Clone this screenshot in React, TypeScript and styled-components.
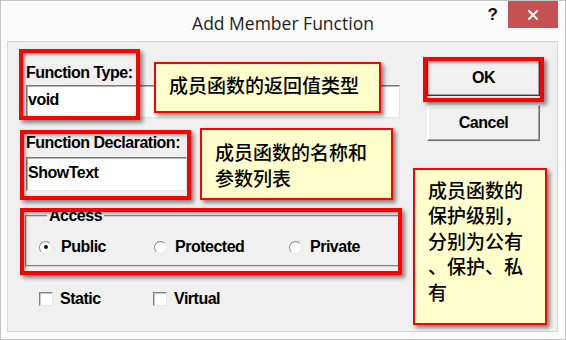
import React from "react";
import styled, { createGlobalStyle } from "styled-components";

const GlobalStyle = createGlobalStyle`
  html, body { margin: 0; padding: 0; background: #ffffff; }
  body { font-family: "Liberation Sans", Arial, sans-serif; }
  * { box-sizing: border-box; }
`;

const Window = styled.div`
  position: relative;
  width: 566px;
  height: 340px;
  border: 1px solid #c4c4c4;
  background: #fbfbfb;
  display: flex;
  flex-direction: column;
  overflow: hidden;
`;

const TitleBar = styled.div`
  height: 40px;
  display: grid;
  grid-template-columns: 1fr auto 1fr;
  align-items: start;
`;

const Title = styled.div`
  grid-column: 2;
  font-family: "Open Sans", "Noto Sans", sans-serif;
  font-size: 17.5px;
  line-height: 24px;
  color: #1e1e1e;
  padding-top: 10px;
  white-space: nowrap;
`;

const TitleControls = styled.div`
  grid-column: 3;
  justify-self: end;
  display: flex;
  align-items: flex-start;
  margin-right: 7px;
`;

const HelpMark = styled.div`
  font-family: "Liberation Sans", Arial, sans-serif;
  font-weight: bold;
  font-size: 17px;
  line-height: 20px;
  color: #111;
  padding-top: 4px;
  margin-right: 10px;
`;

const CloseButton = styled.div`
  width: 50px;
  height: 27px;
  background: #c75050;
  display: flex;
  align-items: center;
  justify-content: center;
`;

const Panel = styled.div`
  margin: 0 7px 0 6px;
  height: 291px;
  border: 1px solid #d6d6d6;
  background: #f0f0f0;
  display: flex;
  gap: 27px;
  padding: 0 17px 0 18px;
`;

const LeftColumn = styled.div`
  width: 374px;
  display: flex;
  flex-direction: column;
`;

const RightColumn = styled.div`
  width: 113px;
  padding-top: 18px;
  display: flex;
  flex-direction: column;
  gap: 9px;
`;

const boldText = `
  font-family: "Liberation Sans", Arial, sans-serif;
  font-weight: bold;
  font-size: 16px;
  letter-spacing: -0.5px;
  line-height: 18px;
  color: #000;
`;

const FieldLabel = styled.div<{ $top: number }>`
  ${boldText}
  margin-top: ${(p) => p.$top}px;
  white-space: nowrap;
`;

const TextBox = styled.div<{ $top: number; $width: number; $height: number; $padTop: number }>`
  ${boldText}
  margin-top: ${(p) => p.$top}px;
  width: ${(p) => p.$width}px;
  height: ${(p) => p.$height}px;
  padding: ${(p) => p.$padTop}px 0 0 1px;
  background: #ffffff;
  border: 1px solid;
  border-color: #7a7a7a #e3e3e3 #e3e3e3 #7a7a7a;
  box-shadow: inset 1px 1px 0 #b4b4b4;
`;

const GroupBox = styled.fieldset`
  margin: 16px 0 0 -1px;
  width: 376px;
  min-inline-size: 0;
  padding: 13px 0 9px 12px;
  border: 2px groove #d4d4d4;
`;

const GroupLegend = styled.legend`
  ${boldText}
  margin-left: 8px;
  padding: 0 2px;
`;

const RadioRow = styled.div`
  display: grid;
  grid-template-columns: 115px 135px auto;
`;

const OptionItem = styled.label<{ $gap: number }>`
  ${boldText}
  display: flex;
  align-items: center;
  gap: ${(p) => p.$gap}px;
  white-space: nowrap;
`;

const RadioCircle = styled.span<{ $checked?: boolean }>`
  width: 13px;
  height: 13px;
  border-radius: 50%;
  background: #ffffff;
  border: 1px solid;
  border-color: #8a8a8a #e8e8e8 #e8e8e8 #8a8a8a;
  display: flex;
  align-items: center;
  justify-content: center;
  flex: none;
  &::after {
    content: "";
    width: 4px;
    height: 4px;
    border-radius: 50%;
    background: ${(p) => (p.$checked ? "#111" : "transparent")};
  }
`;

const CheckRow = styled.div`
  margin-top: 23px;
  padding-left: 13px;
  display: grid;
  grid-template-columns: 114px auto;
`;

const CheckSquare = styled.span`
  width: 14px;
  height: 14px;
  background: #ffffff;
  border: 1px solid;
  border-color: #7f7f7f #e6e6e6 #e6e6e6 #7f7f7f;
  box-shadow: inset 1px 1px 0 #c8c8c8;
  flex: none;
`;

const PushButton = styled.div<{ $isDefault?: boolean }>`
  ${boldText}
  height: 36px;
  display: flex;
  align-items: center;
  justify-content: center;
  background: #f0f0f0;
  border: 1px solid;
  border-color: ${(p) => (p.$isDefault ? "#3c3c3c" : "#ffffff #6d6d6d #6d6d6d #ffffff")};
  box-shadow: inset -1px -1px 0 #a0a0a0, inset 1px 1px 0 #fdfdfd;
`;

const Highlight = styled.div<{ $x: number; $y: number; $w: number; $h: number }>`
  position: absolute;
  left: ${(p) => p.$x - 1}px;
  top: ${(p) => p.$y - 1}px;
  width: ${(p) => p.$w}px;
  height: ${(p) => p.$h}px;
  border: 4px solid #ff0000;
  box-shadow: 3px 3px 4px rgba(0, 0, 0, 0.45), inset 2px 2px 3px rgba(0, 0, 0, 0.3);
  pointer-events: none;
`;

const Callout = styled.div<{ $x: number; $y: number; $w: number; $h: number; $padTop: number; $lineHeight: number }>`
  position: absolute;
  left: ${(p) => p.$x - 1}px;
  top: ${(p) => p.$y - 1}px;
  width: ${(p) => p.$w}px;
  height: ${(p) => p.$h}px;
  padding: ${(p) => p.$padTop}px 0 0 13px;
  background: #ffffcc;
  border: 2px solid #ff0000;
  box-shadow: 3px 3px 4px rgba(0, 0, 0, 0.45);
  font-family: "Noto Sans CJK SC", "Noto Sans", sans-serif;
  font-weight: 500;
  font-size: 19px;
  line-height: ${(p) => p.$lineHeight}px;
  color: #000;
`;

const CalloutLine = styled.span`
  display: block;
  white-space: nowrap;
`;

export default function App() {
  return (
    <>
      <GlobalStyle />
      <Window>
        <TitleBar>
          <Title>Add Member Function</Title>
          <TitleControls>
            <HelpMark>?</HelpMark>
            <CloseButton>
              <svg width="10" height="10" viewBox="0 0 10 10">
                <path d="M1 1 L9 9 M9 1 L1 9" stroke="#ffffff" strokeWidth="2" strokeLinecap="square" />
              </svg>
            </CloseButton>
          </TitleControls>
        </TitleBar>
        <Panel>
          <LeftColumn>
            <FieldLabel $top={22}>Function Type:</FieldLabel>
            <TextBox $top={3} $width={374} $height={33} $padTop={5}>void</TextBox>
            <FieldLabel $top={16}>Function Declaration:</FieldLabel>
            <TextBox $top={5} $width={161} $height={34} $padTop={6}>ShowText</TextBox>
            <GroupBox>
              <GroupLegend>Access</GroupLegend>
              <RadioRow>
                <OptionItem $gap={9}>
                  <RadioCircle $checked />
                  Public
                </OptionItem>
                <OptionItem $gap={8}>
                  <RadioCircle />
                  Protected
                </OptionItem>
                <OptionItem $gap={8}>
                  <RadioCircle />
                  Private
                </OptionItem>
              </RadioRow>
            </GroupBox>
            <CheckRow>
              <OptionItem $gap={7}>
                <CheckSquare />
                Static
              </OptionItem>
              <OptionItem $gap={7}>
                <CheckSquare />
                Virtual
              </OptionItem>
            </CheckRow>
          </LeftColumn>
          <RightColumn>
            <PushButton $isDefault>OK</PushButton>
            <PushButton>Cancel</PushButton>
          </RightColumn>
        </Panel>

        <Highlight $x={19} $y={49} $w={121} $h={71} />
        <Highlight $x={20} $y={130} $w={171} $h={70} />
        <Highlight $x={20} $y={208} $w={382} $h={67} />
        <Highlight $x={423} $y={57} $w={121} $h={45} />

        <Callout $x={154} $y={62} $w={227} $h={51} $padTop={8} $lineHeight={26}>
          <CalloutLine>成员函数的返回值类型</CalloutLine>
        </Callout>
        <Callout $x={200} $y={128} $w={193} $h={72} $padTop={9} $lineHeight={26}>
          <CalloutLine>成员函数的名称和</CalloutLine>
          <CalloutLine>参数列表</CalloutLine>
        </Callout>
        <Callout $x={413} $y={168} $w={134} $h={157} $padTop={7} $lineHeight={25.4}>
          <CalloutLine>成员函数的</CalloutLine>
          <CalloutLine>保护级别，</CalloutLine>
          <CalloutLine>分别为公有</CalloutLine>
          <CalloutLine>、保护、私</CalloutLine>
          <CalloutLine>有</CalloutLine>
        </Callout>
      </Window>
    </>
  );
}
